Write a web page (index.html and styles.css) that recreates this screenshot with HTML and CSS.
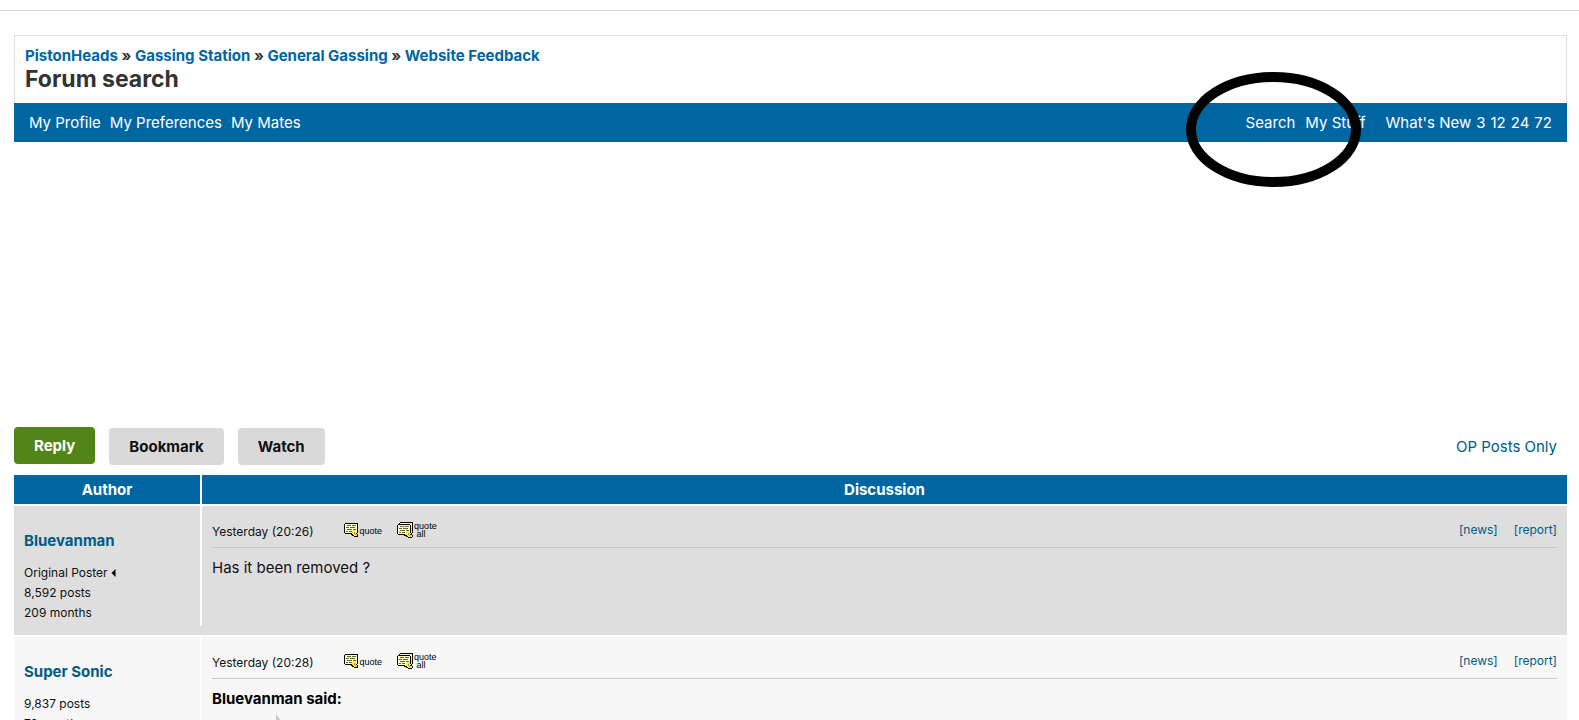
FILE: index.html
```
<!DOCTYPE html>
<html lang="en">
<head>
<meta charset="utf-8">
<title>Forum search - PistonHeads</title>
<link rel="stylesheet" href="styles.css">
</head>
<body>
<svg class="sprites" aria-hidden="true">
  <symbol id="note" viewBox="0 0 14 14">
    <path fill="#ffffcc" d="M1 1h12v9H1z"/>
    <path fill="#66662e" d="M3 2h4v1H3zM8 2h4v1H8zM2 4h3v1H2zM6 4h5v1H6zM3 6h5v1H3zM9 6h3v1H9zM2 8h2v1H2zM5 8h3v1H5z"/>
    <path fill="#000" d="M1 0h13v1H1zM0 1h1v9H0zM13 1h1v9h-1zM1 10h7v1H1zM7 11h2v1H7zM8 12h2v1H8zM10 13h4v1h-4zM12 10h1v1h-1zM13 11h1v2h-1z"/>
    <path fill="#ffee32" d="M9 7h3v1H9zM8 8h4v2H8zM8 10h4v1H8zM9 11h4v1H9zM10 12h3v1h-3z"/>
    <path fill="#a89a20" d="M10 9h1v2h-1zM11 11h1v1h-1z"/>
  </symbol>
  <symbol id="notes" viewBox="0 0 16 16">
    <path fill="#ffffcc" d="M3 1h12v10H3zM1 3h12v9H1z"/>
    <path fill="#000" d="M3 0h13v1H3zM2 1h1v1H2zM15 1h1v10h-1zM1 2h12v1H1zM0 3h1v9H0zM13 3h1v8h-1zM1 12h7v1H1zM7 13h3v1H7zM9 14h2v1H9zM11 15h4v1h-4zM14 11h1v2h-1zM13 12h1v1h-1zM15 13h1v2h-1z"/>
    <path fill="#66662e" d="M3 4h4v1H3zM8 4h4v1H8zM2 6h3v1H2zM6 6h5v1H6zM3 8h5v1H3zM9 8h3v1H9zM2 10h2v1H2zM5 10h3v1H5z"/>
    <path fill="#ffee32" d="M14 5h1v6h-1zM10 9h3v1h-3zM9 10h4v1H9zM9 11h4v2H9zM10 13h4v1h-4zM11 14h4v1h-4z"/>
    <path fill="#a89a20" d="M11 11h1v2h-1zM12 13h1v1h-1z"/>
  </symbol>
</svg>

<header class="top"></header>

<main class="page">
  <section class="heading">
    <nav class="crumbs">
      <a href="#">PistonHeads</a> » <a href="#">Gassing Station</a> » <a href="#">General Gassing</a> » <a href="#">Website Feedback</a>
    </nav>
    <h1>Forum search</h1>
  </section>

  <nav class="bar">
    <div class="links">
      <a href="#">My Profile</a>
      <a href="#">My Preferences</a>
      <a href="#">My Mates</a>
    </div>
    <div class="links">
      <a href="#">Search</a>
      <a href="#">My Stuff</a>
      <div class="new"><span>What's New</span><a href="#">3</a><a href="#">12</a><a href="#">24</a><a href="#">72</a></div>
    </div>
    <svg class="ring" viewBox="0 0 175 115" aria-hidden="true"><ellipse cx="87.5" cy="57.5" rx="82.5" ry="52.5"/></svg>
  </nav>

  <div class="ad"></div>

  <div class="actions">
    <button class="btn reply" type="button">Reply</button>
    <button class="btn" type="button">Bookmark</button>
    <button class="btn" type="button">Watch</button>
    <a class="only" href="#">OP Posts Only</a>
  </div>

  <section class="thread">
    <div class="row head">
      <div>Author</div>
      <div>Discussion</div>
    </div>

    <article class="row post first">
      <div class="author">
        <a class="name" href="#">Bluevanman</a>
        <p class="op">Original Poster <svg viewBox="0 0 4 8" aria-hidden="true"><path d="M4 0v8L0 4z"/></svg></p>
        <p>8,592 posts</p>
        <p>209 months</p>
      </div>
      <div class="body">
        <div class="meta">
          <time>Yesterday (20:26)</time>
          <a class="quote" href="#"><svg class="note"><use href="#note"/></svg><span>quote</span></a>
          <a class="quote all" href="#"><svg class="notes"><use href="#notes"/></svg><span>quote<br>&nbsp;all</span></a>
          <div class="tools"><a href="#">[news]</a><a href="#">[report]</a></div>
        </div>
        <p class="text">Has it been removed ?</p>
      </div>
    </article>

    <article class="row post">
      <div class="author">
        <a class="name" href="#">Super Sonic</a>
        <p>9,837 posts</p>
        <p>78 months</p>
      </div>
      <div class="body">
        <div class="meta">
          <time>Yesterday (20:28)</time>
          <a class="quote" href="#"><svg class="note"><use href="#note"/></svg><span>quote</span></a>
          <a class="quote all" href="#"><svg class="notes"><use href="#notes"/></svg><span>quote<br>&nbsp;all</span></a>
          <div class="tools"><a href="#">[news]</a><a href="#">[report]</a></div>
        </div>
        <p class="text said">Bluevanman said:</p>
        <svg class="tip" viewBox="0 0 16 16" aria-hidden="true"><path d="M1 0v16h11z"/></svg>
      </div>
    </article>
  </section>
</main>
</body>
</html>
```
FILE: styles.css
```
* { box-sizing: border-box; }
body {
  margin: 0;
  height: 100vh;
  overflow: hidden;
  background: #fff;
  color: #111;
  font: 15px/20px Inter, "Liberation Sans", sans-serif;
}
a { color: #005b85; text-decoration: none; }
p, h1 { margin: 0; }
svg { display: block; }
.sprites { display: none; }

.top { height: 11px; border-bottom: 1px solid #d9d9d9; }
.page { padding: 24px 12px 0 14px; }

.heading {
  border: 1px solid #e0e0e0;
  border-bottom: 0;
  padding: 10px 10px 11px;
  color: #333;
}
.crumbs { font-weight: 700; }
.crumbs a { color: #0066a1; }
.heading h1 { font-size: 23px; line-height: 26px; font-weight: 700; }

.bar {
  position: relative;
  display: flex;
  justify-content: space-between;
  align-items: center;
  height: 39px;
  padding: 0 15px;
  background: #0066a1;
  color: #fff;
}
.bar a { color: #fff; }
.links { display: flex; gap: 10px; }
.links:first-child { gap: 9px; }
.new { display: flex; gap: 5px; margin-left: 10px; }
.ring {
  position: absolute;
  top: -31px;
  right: 206px;
  width: 175px;
  height: 115px;
  fill: none;
  stroke: #000;
  stroke-width: 10;
}

.ad { height: 285px; }

.actions { display: flex; gap: 14px; align-items: flex-end; padding-bottom: 10px; height: 48px; }
.btn {
  height: 37px;
  padding: 0 20px;
  border: 0;
  border-radius: 4px;
  background: #d9d9d9;
  color: #111;
  font: 700 15px/20px Inter, "Liberation Sans", sans-serif;
}
.reply { align-self: flex-start; background: #528517; color: #fff; }
.only { margin: 0 10px 8px auto; }

.row { display: grid; grid-template-columns: 186px 1fr; column-gap: 2px; margin-bottom: 2px; }
.head > div {
  padding: 5px 0 4px;
  background: #0066a1;
  color: #fff;
  font-weight: 700;
  text-align: center;
}
.post { background: #f7f7f7; padding-bottom: 9px; }
.first { background: #dedede; }
.post .body { border-left: 2px solid #fff; margin-left: -2px; }
.author { padding: 25px 10px 3px; font-size: 12px; }
.name { display: block; margin-bottom: 12px; font-size: 15px; font-weight: 700; }
.op { display: flex; align-items: center; gap: 3px; }
.op svg { width: 5px; height: 8px; }
.body { padding: 14px 10px 0; }
.meta {
  display: flex;
  align-items: center;
  height: 28px;
  padding-bottom: 7px;
  border-bottom: 1px solid #c8c8c8;
  font-size: 12px;
}
.meta time { flex: none; padding-top: 3px; }
.quote {
  display: flex;
  align-items: center;
  gap: 2px;
  margin-left: 30px;
  color: #000;
  font: 9px/8px "Liberation Sans", sans-serif;
}
.quote span { padding-top: 2px; }
.all { margin-left: 15px; gap: 1px; }
.all span { padding-top: 0; }
.note { width: 14px; height: 14px; }
.notes { width: 16px; height: 16px; }
.tools { display: flex; gap: 16px; margin-left: auto; }
.text { padding-top: 10px; color: #111; }
.said { font-weight: 700; color: #000; }
.tip { width: 16px; height: 16px; margin: 5px 0 0 63px; fill: #c8c8c8; }
```
